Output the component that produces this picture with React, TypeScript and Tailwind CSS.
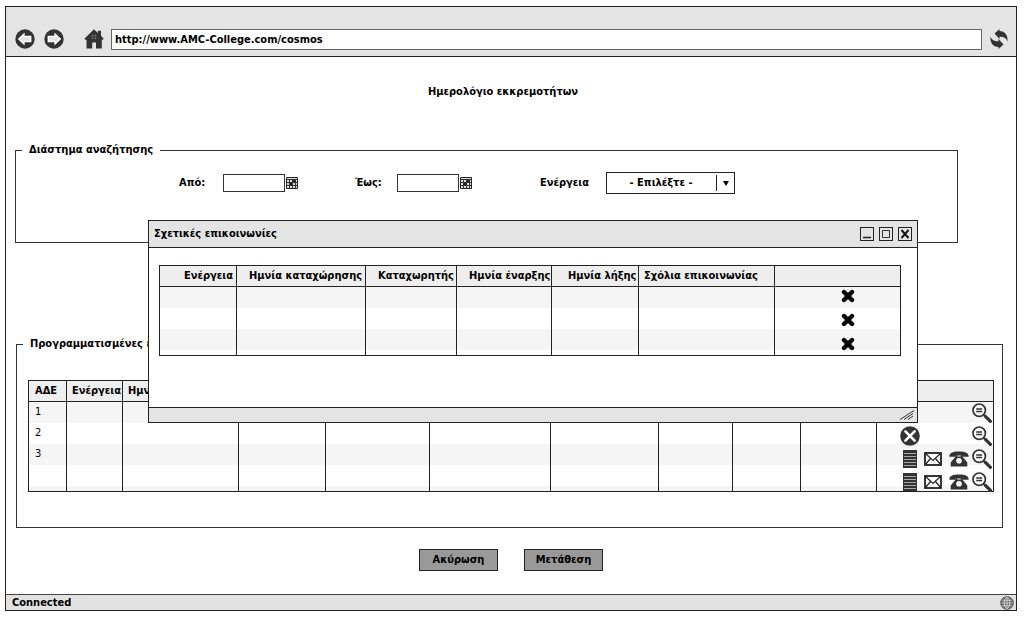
import React, { useState } from "react";

type IconProps = { className?: string };

/* --- Icons --- */

const ArrowIcon = ({ className }: IconProps) => (
  <svg viewBox="0 0 20 20" className={className} aria-hidden="true">
    <circle cx="10" cy="10" r="9.7" fill="#333" />
    <path d="M2.8 10 9.6 3.4v3.4h6.8v6.4H9.6v3.4z" fill="#fff" />
    <path d="M5 10l3.4-3.4v1.700h6.500v3.400H8.400v1.700z" fill="#e4e4e4" />
  </svg>
);

const HomeIcon = () => (
  <svg viewBox="0 0 20 20" className="h-5 w-5" aria-hidden="true">
    <path d="M10 .3 13.800 4V1.800H17v5l2.700 2.900-1.200 1.400-.7-.5v9H12v-6H8.200v6H2.500v-9l-.8.500L.4 9.700z" fill="#333" />
    <path d="M7.800 5.800h1.600v1.600H7.800zM10.600 5.800h1.600v1.600h-1.600zM7.800 8.400h1.600V10H7.800zM10.600 8.400h1.600V10h-1.600z" fill="#777" />
  </svg>
);

const ReloadIcon = () => (
  <svg viewBox="0 0 20 20" className="h-5 w-5" fill="#333" aria-hidden="true">
    <path d="M5.500 4.400 10.500 0v2c5.500 0 8.700 4.500 8 10.500-1-3.200-3.500-5-8-4.800V10z" />
    <path d="M14.500 15.600 9.500 20v-2C4 18 .8 13.500 1.500 7.500c1 3.200 3.500 5 8 4.800V10z" />
  </svg>
);

const CalendarIcon = () => (
  <svg viewBox="0 0 12 12" className="h-3 w-3" aria-hidden="true">
    <path d="M.5.5h11v11H.5z" fill="#ddd" stroke="#222" />
    <path d="M1 2.500h10M1 5.500h10M1 8.500h10M3.500 3v8M6.500 3v8M9.500 3v8" stroke="#333" />
    <path d="M4 6h2v2H4zM7 3h2v2H7z" fill="#222" />
  </svg>
);

const DeleteIcon = () => (
  <svg viewBox="0 0 14 14" className="h-[14px] w-[14px]" aria-hidden="true">
    <path d="M3 3 11 11M11 3 3 11" stroke="#000" strokeWidth="4.400" strokeLinecap="round" />
  </svg>
);

const SearchIcon = () => (
  <svg viewBox="0 0 20 20" className="h-5 w-5" fill="none" stroke="#333" aria-hidden="true">
    <circle cx="7.200" cy="7.200" r="6.200" strokeWidth="1.700" fill="#fff" />
    <path d="M4.200 6h6M4.200 8.500h6" strokeWidth="1.500" />
    <path d="m11.600 11.600 2 2" strokeWidth="1.800" />
    <path d="m13.400 13.400 5 5" strokeWidth="3.200" strokeLinecap="round" />
  </svg>
);

const CancelIcon = () => (
  <svg viewBox="0 0 20 20" className="h-5 w-5" aria-hidden="true">
    <circle cx="10" cy="10" r="9.800" fill="#333" />
    <path d="m5.400 5.400 9.200 9.200M14.600 5.400l-9.200 9.200" stroke="#fff" strokeWidth="2.600" strokeLinecap="round" />
  </svg>
);

const NotesIcon = () => (
  <svg viewBox="0 0 14 18" className="h-[18px] w-[14px]" aria-hidden="true">
    <rect width="14" height="18" fill="#333" />
    <path d="M1 3.500h12M1 6.500h12M1 9.500h12M1 12.500h12M1 15.500h12" stroke="#aaa" />
  </svg>
);

const MailIcon = () => (
  <svg viewBox="0 0 18 14" className="h-[14px] w-[18px]" fill="none" stroke="#222" aria-hidden="true">
    <rect x="1" y="1" width="16" height="12" strokeWidth="1.800" fill="#fff" />
    <path d="m1.500 1.500 7.500 7 7.500-7M1.500 12.500l5-6M16.500 12.500l-5-6" strokeWidth="1.200" />
  </svg>
);

const PhoneIcon = () => (
  <svg viewBox="0 0 20 16" className="h-4 w-5" aria-hidden="true">
    <path d="M.3 5.800C.3 1.800 4 .5 10 .5s9.700 1.300 9.700 5.300H14V4.400H6v1.400z" fill="#333" />
    <path d="M6.200 4h2v1.500h3.600V4h2v2l4.500 5.500v4H1.700v-4L6.200 6z" fill="#333" />
    <circle cx="10" cy="9.700" r="2.800" fill="#fff" />
  </svg>
);

const GlobeIcon = () => (
  <svg viewBox="0 0 14 14" className="h-[14px] w-[14px]" fill="none" stroke="#eee" strokeWidth=".7" aria-hidden="true">
    <circle cx="7" cy="7" r="6.500" fill="#666" stroke="#666" />
    <ellipse cx="7" cy="7" rx="2.800" ry="5.500" />
    <path d="M7 1.500v11M1.500 7h11M2.400 4.300h9.200M2.400 9.700h9.200" />
  </svg>
);

/* --- Data --- */

const contactColumns = [
  { label: "Ενέργεια", width: "w-[77px]", pad: "pl-6" },
  { label: "Ημνία καταχώρησης", width: "w-[129px]", pad: "pl-3" },
  { label: "Καταχωρητής", width: "w-[91px]", pad: "pl-3" },
  { label: "Ημνία έναρξης", width: "w-[95px]", pad: "pl-3" },
  { label: "Ημνία λήξης", width: "w-[87px]", pad: "pl-4" },
  { label: "Σχόλια επικοινωνίας", width: "w-[136px]", pad: "pl-[5px]" },
  { label: "", width: "", pad: "" },
];

const taskColumns = [
  { label: "ΑΔΕ", width: "w-[38px]", pad: "pl-[6px]" },
  { label: "Ενέργεια", width: "w-[56px]", pad: "pl-[5px]" },
  { label: "Ημνία", width: "w-[116px]", pad: "pl-[5px]" },
  { label: "", width: "w-[87px]", pad: "" },
  { label: "", width: "w-[104px]", pad: "" },
  { label: "", width: "w-[121px]", pad: "" },
  { label: "", width: "w-[108px]", pad: "" },
  { label: "", width: "w-[74px]", pad: "" },
  { label: "", width: "w-[68px]", pad: "" },
  { label: "", width: "w-[76px]", pad: "" },
  { label: "", width: "", pad: "" },
];

type GridProps = {
  columns: { label: string; width: string; pad: string }[];
  rows: string[];
};

function DataGrid({ columns, rows }: GridProps) {
  return (
    <table className="w-full table-fixed border-collapse border border-[#222] bg-white">
      <thead>
        <tr className="h-[21px] border-b border-[#222] bg-[#eee]">
          {columns.map((col, i) => (
            <th key={i} className={`${col.width} ${col.pad} overflow-hidden border-r border-[#222] p-0 text-left leading-4 whitespace-nowrap`}>
              {col.label}
            </th>
          ))}
        </tr>
      </thead>
      <tbody>
        {rows.map((row, r) => (
          <tr key={r} className="h-[21px] odd:bg-[#f5f5f5]">
            {columns.map((_, i) => (
              <td key={i} className="border-r border-[#222] p-0 pl-[6px] leading-4">
                {i === 0 ? row : ""}
              </td>
            ))}
          </tr>
        ))}
        <tr className="h-[6px] odd:bg-[#f5f5f5]">
          {columns.map((_, i) => (
            <td key={i} className="border-r border-[#222] p-0" />
          ))}
        </tr>
      </tbody>
    </table>
  );
}

function DateField({ id, label, labelWidth }: { id: string; label: string; labelWidth: string }) {
  return (
    <div className="flex items-center">
      <label htmlFor={id} className={labelWidth}>{label}</label>
      <input id={id} type="text" className="mr-px h-[18px] w-[62px] border border-[#333] bg-white px-1" />
      <button type="button" aria-label={`Ημερολόγιο ${label}`}><CalendarIcon /></button>
    </div>
  );
}

function ContactsDialog() {
  return (
    <div role="dialog" aria-labelledby="dialog-title" className="absolute top-[163px] right-[98px] left-[142px] border border-[#222] bg-white">
      <div className="flex h-[27px] items-center justify-between border-b border-[#222] bg-[#e4e4e4] pr-[5px] pl-[5px]">
        <h2 id="dialog-title">Σχετικές επικοινωνίες</h2>
        <div className="flex gap-[5px]">
          <button type="button" aria-label="Ελαχιστοποίηση" className="h-[14px] w-[14px] border border-[#222]">
            <svg viewBox="0 0 12 12" className="h-3 w-3"><path d="M2 9.500h8" stroke="#222" strokeWidth="1.500" /></svg>
          </button>
          <button type="button" aria-label="Μεγιστοποίηση" className="h-[14px] w-[14px] border border-[#222]">
            <svg viewBox="0 0 12 12" className="h-3 w-3"><path d="M2.500 2.500h7v7h-7z" stroke="#333" fill="none" /></svg>
          </button>
          <button type="button" aria-label="Κλείσιμο" className="h-[14px] w-[14px] border border-[#222]">
            <svg viewBox="0 0 12 12" className="h-3 w-3"><path d="m2.500 2 7 8M9.500 2l-7 8" stroke="#111" strokeWidth="1.900" /></svg>
          </button>
        </div>
      </div>

      <div className="pt-[17px] pr-4 pb-[51px] pl-[10px]">
        <div className="relative">
          <DataGrid columns={contactColumns} rows={["", "", ""]} />
          <div className="absolute top-[19px] right-[46px] flex flex-col">
            {[1, 2, 3].map((n) => (
              <button key={n} type="button" aria-label={`Διαγραφή ${n}`} className="flex h-6 items-center">
                <DeleteIcon />
              </button>
            ))}
          </div>
        </div>
      </div>

      <div className="flex h-[15px] items-center justify-end border-t border-[#222] bg-[#e4e4e4] pr-[2px]">
        <svg viewBox="0 0 16 12" className="h-3 w-4" stroke="#333" fill="none" aria-hidden="true">
          <path d="M1 10.500 15 1.500M5 10.500l9-6M9 10.500l5-3.500" />
        </svg>
      </div>
    </div>
  );
}

function TaskActions() {
  return (
    <div className="absolute top-[21px] right-[2px] flex flex-col">
      {[1, 2, 3, 4].map((n) => (
        <div key={n} className="flex h-[23px] items-center justify-end">
          {n === 2 && (
            <button type="button" aria-label="Ακύρωση ενέργειας" className="mr-[52px]"><CancelIcon /></button>
          )}
          {n > 2 && (
            <>
              <button type="button" aria-label="Σημειώσεις" className="mr-[7px]"><NotesIcon /></button>
              <button type="button" aria-label="Email" className="mr-[7px]"><MailIcon /></button>
              <button type="button" aria-label="Τηλέφωνο" className="mr-[3px]"><PhoneIcon /></button>
            </>
          )}
          <button type="button" aria-label="Προβολή"><SearchIcon /></button>
        </div>
      ))}
    </div>
  );
}

export default function App() {
  const [url, setUrl] = useState("http://www.AMC-College.com/cosmos");

  return (
    <div className="flex min-h-screen flex-col bg-white pt-[6px] pr-[7px] pb-[6px] pl-[5px] font-['DejaVu_Sans_Condensed','DejaVu_Sans',sans-serif] text-[11px] leading-4 text-black [&_button]:block">
      <div className="flex flex-1 flex-col border border-[#222]">
        {/* Browser toolbar */}
        <header className="flex h-[50px] items-end border-b border-[#222] bg-[#e4e4e4] pr-[7px] pb-[6px] pl-[9px]">
          <div className="flex w-full items-start font-bold">
            <button type="button" aria-label="Πίσω"><ArrowIcon className="h-5 w-5" /></button>
            <button type="button" aria-label="Εμπρός" className="ml-[9px]"><ArrowIcon className="h-5 w-5 rotate-180" /></button>
            <button type="button" aria-label="Αρχική" className="mr-[7px] ml-5"><HomeIcon /></button>
            <input
              type="text"
              aria-label="Διεύθυνση"
              value={url}
              onChange={(e) => setUrl(e.target.value)}
              className="h-[21px] flex-1 border border-[#666] bg-white px-[3px]"
            />
            <button type="button" aria-label="Ανανέωση" className="ml-[7px]"><ReloadIcon /></button>
          </div>
        </header>

        <main className="relative flex-1 pt-[27px]">
          <h1 className="pr-4 text-center font-bold">Ημερολόγιο εκκρεμοτήτων</h1>

          <fieldset className="mt-[42px] mr-[58px] ml-[9px] h-[101px] border border-[#333] font-bold">
            <legend className="ml-[6px] px-[7px]">Διάστημα αναζήτησης</legend>
            <div className="flex items-center pt-[14px] pl-[163px]">
              <DateField id="from" label="Από:" labelWidth="w-[44px]" />
              <div className="ml-[57px]">
                <DateField id="to" label="Έως:" labelWidth="w-[42px]" />
              </div>
              <label htmlFor="action" className="ml-[68px] w-[66px]">Ενέργεια</label>
              <div className="relative">
                <select id="action" className="h-[22px] w-[129px] appearance-none border border-[#222] bg-white pr-[19px] text-center">
                  <option>- Επιλέξτε -</option>
                </select>
                <div className="pointer-events-none absolute top-[3px] right-[6px] flex h-4 items-center border-l border-[#222] pl-[6px]">
                  <svg viewBox="0 0 6 5" className="h-[5px] w-[6px]" aria-hidden="true"><path d="M0 0h6L3 5z" /></svg>
                </div>
              </div>
            </div>
          </fieldset>

          <fieldset className="mt-[93px] mr-[13px] ml-[10px] h-[192px] border border-[#333]">
            <legend className="ml-[6px] px-[7px] font-bold">Προγραμματισμένες ενέργειες</legend>
            <div className="relative mt-7 mr-2 ml-[11px]">
              <DataGrid columns={taskColumns} rows={["1", "2", "3", ""]} />
              <TaskActions />
            </div>
          </fieldset>

          <div className="mt-[21px] flex justify-center gap-[26px]">
            <button type="button" className="h-[22px] w-[79px] border border-[#222] bg-[#999] font-bold">Ακύρωση</button>
            <button type="button" className="h-[22px] w-[79px] border border-[#222] bg-[#999] font-bold">Μετάθεση</button>
          </div>

          <div className="font-bold">
            <ContactsDialog />
          </div>
        </main>

        <footer className="flex h-4 items-center justify-between border-t border-[#444] bg-[#e1e1e1] pr-[2px] pl-[6px] font-bold">
          <span>Connected</span>
          <GlobeIcon />
        </footer>
      </div>
    </div>
  );
}
